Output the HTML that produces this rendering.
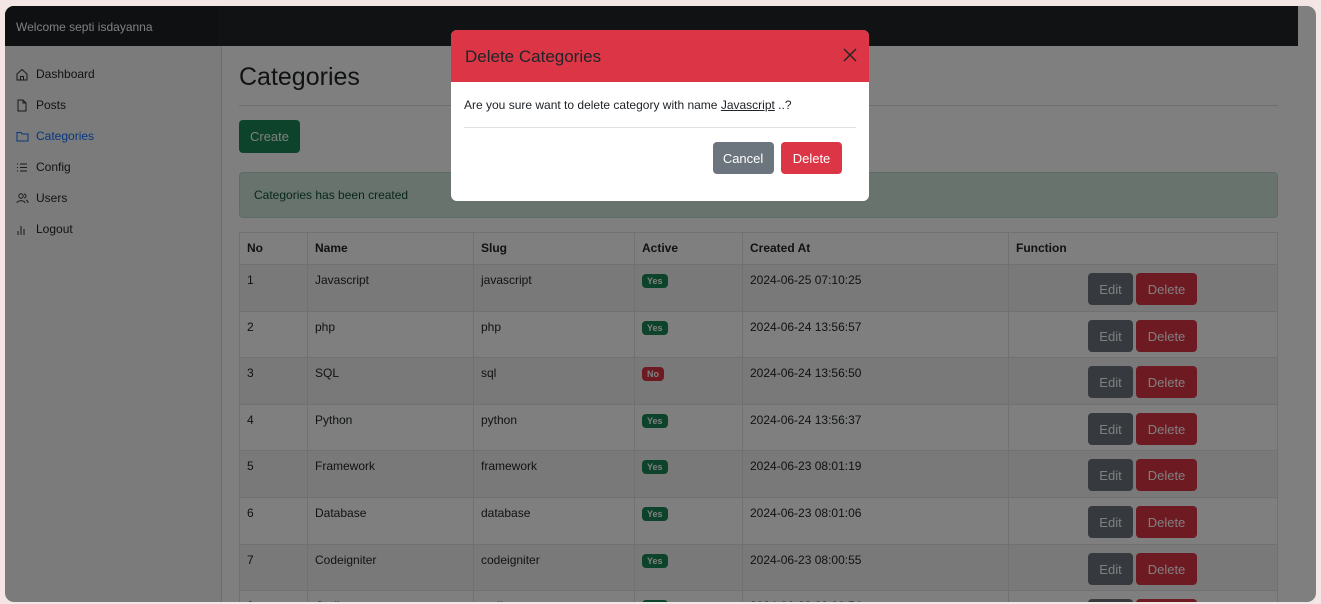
<!DOCTYPE html>
<html><head><style>
*{box-sizing:border-box;margin:0;padding:0}
html,body{width:1321px;height:604px;overflow:hidden}
body{background:#f3e6e4;font-family:"Liberation Sans",sans-serif;position:relative}
#win{position:absolute;left:5px;top:6px;width:1311px;height:596px;border-radius:9px;overflow:hidden;background:#fff}
#hdr{position:absolute;left:0;top:0;width:1293px;height:40px;background:#212529}
#hdr .brand{position:absolute;left:0;top:0;width:213px;height:40px;background:#1d2024;color:#fff;font-size:12px;padding:14px 0 0 11px}
#side{position:absolute;left:0;top:40px;width:217px;height:560px;background:#f7f7f7;border-right:1px solid #dcdcdc;padding-top:21px}
#side div{height:31px;font-size:12px;color:#212529;padding-left:31px;position:relative}
#side div svg{position:absolute;left:11px;top:1px}
#side div.act{color:#0d6efd}
#main{position:absolute;left:234px;top:40px;width:1039px}
h1{font-size:25px;font-weight:normal;color:#212529;margin-top:17px;height:43px;border-bottom:1px solid #ddd;padding-bottom:8px}
.create{position:absolute;top:74px;left:0;width:61px;height:33px;background:#198754;color:#fff;border-radius:4px;font-size:13px;text-align:center;line-height:33px}
.alert{position:absolute;top:126px;left:0;width:1039px;height:46px;background:#d1e7dd;border:1px solid #badbcc;border-radius:4px;color:#0f5132;font-size:12px;padding:15px 14px}
table{position:absolute;top:186px;left:0;width:1039px;border-collapse:collapse;font-size:12px;color:#212529}
td,th{border:1px solid #dee2e6;text-align:left;vertical-align:top;padding:8px 7px}
th{height:32px;font-weight:bold}
td{height:46.6px}
tbody tr:nth-child(odd) td{background:#f2f2f2}
.b{display:inline-block;color:#fff;font-size:9px;font-weight:bold;border-radius:4px;padding:2px 5px}
.y{background:#198754}.n{background:#dc3545}
.fn{padding:8px 0 0 79px}
.btn{display:inline-block;height:32px;line-height:34px;border-radius:4px;color:#fff;font-size:13px;text-align:center}
.e{width:45px;background:#6c757d;margin-right:3px}.d{width:61px;background:#dc3545}
#ov{position:absolute;inset:0;background:rgba(0,0,0,.5)}
#modal{position:absolute;left:446px;top:24px;width:418px;height:171px;background:#fff;border-radius:6px;overflow:hidden}
#modal .mh{height:52px;background:#dc3545;color:#212529;font-size:17px;padding:17px 14px}
#modal .x{position:absolute;right:12px;top:18px}
#modal .mb{font-size:12px;color:#212529;padding-top:16px;height:46px;margin:0 13px;border-bottom:1px solid #dee2e6}
#modal .mf{position:absolute;right:27px;top:112px}
</style></head><body>
<div id="win">
<div id="hdr"><div class="brand">Welcome septi isdayanna</div></div>
<div id="side">
<div><svg width="12" height="13" viewBox="0 0 12 13" fill="none" stroke="#333" stroke-width="1"><path d="M1 6L6 1.5 11 6V12H1Z M4.5 12V8.5h3V12"/></svg>Dashboard</div>
<div><svg width="12" height="13" viewBox="0 0 12 13" fill="none" stroke="#333"><path d="M2 1h5l3 3v8H2Z M7 1v3h3"/></svg>Posts</div>
<div class="act"><svg width="13" height="13" viewBox="0 0 13 13" fill="none" stroke="#0d6efd"><path d="M1 2.5h4l1 1.5h6v7H1Z"/></svg>Categories</div>
<div><svg width="12" height="13" viewBox="0 0 12 13" fill="none" stroke="#333"><path d="M1 3h1M1 6.5h1M1 10h1M4 3h7M4 6.5h7M4 10h7"/></svg>Config</div>
<div><svg width="13" height="13" viewBox="0 0 13 13" fill="none" stroke="#333"><circle cx="5" cy="4" r="2.2"/><path d="M1 11c0-3 8-3 8 0M8 2a2 2 0 0 1 0 4M10 8c1.5.5 2 1.5 2 3"/></svg>Users</div>
<div><svg width="12" height="13" viewBox="0 0 12 13" fill="none" stroke="#333"><path d="M2 12V8M5 12V3M8 12V6M11 12h0"/></svg>Logout</div>
</div>
<div id="main">
<h1>Categories</h1>
<div class="create">Create</div>
<div class="alert">Categories has been created</div>
<table>
<colgroup><col style="width:68px"><col style="width:166px"><col style="width:161px"><col style="width:108px"><col style="width:266px"><col></colgroup>
<thead><tr><th>No</th><th>Name</th><th>Slug</th><th>Active</th><th>Created At</th><th>Function</th></tr></thead>
<tbody>
<tr><td>1</td><td>Javascript</td><td>javascript</td><td><span class="b y">Yes</span></td><td>2024-06-25 07:10:25</td><td class="fn"><span class="btn e">Edit</span><span class="btn d">Delete</span></td></tr>
<tr><td>2</td><td>php</td><td>php</td><td><span class="b y">Yes</span></td><td>2024-06-24 13:56:57</td><td class="fn"><span class="btn e">Edit</span><span class="btn d">Delete</span></td></tr>
<tr><td>3</td><td>SQL</td><td>sql</td><td><span class="b n">No</span></td><td>2024-06-24 13:56:50</td><td class="fn"><span class="btn e">Edit</span><span class="btn d">Delete</span></td></tr>
<tr><td>4</td><td>Python</td><td>python</td><td><span class="b y">Yes</span></td><td>2024-06-24 13:56:37</td><td class="fn"><span class="btn e">Edit</span><span class="btn d">Delete</span></td></tr>
<tr><td>5</td><td>Framework</td><td>framework</td><td><span class="b y">Yes</span></td><td>2024-06-23 08:01:19</td><td class="fn"><span class="btn e">Edit</span><span class="btn d">Delete</span></td></tr>
<tr><td>6</td><td>Database</td><td>database</td><td><span class="b y">Yes</span></td><td>2024-06-23 08:01:06</td><td class="fn"><span class="btn e">Edit</span><span class="btn d">Delete</span></td></tr>
<tr><td>7</td><td>Codeigniter</td><td>codeigniter</td><td><span class="b y">Yes</span></td><td>2024-06-23 08:00:55</td><td class="fn"><span class="btn e">Edit</span><span class="btn d">Delete</span></td></tr>
<tr><td>8</td><td>Coding</td><td>coding</td><td><span class="b y">Yes</span></td><td>2024-06-23 08:00:54</td><td class="fn"><span class="btn e">Edit</span><span class="btn d">Delete</span></td></tr>
</tbody></table>
</div>
<div id="ov"></div>
<div id="modal">
<div class="mh">Delete Categories</div>
<svg class="x" width="14" height="14" viewBox="0 0 14 14" stroke="#222" stroke-width="1.4"><path d="M1 1L13 13M13 1L1 13"/></svg>
<div class="mb">Are you sure want to delete category with name <u>Javascript</u> ..?</div>
<div class="mf"><span class="btn" style="width:61px;background:#6c757d">Cancel</span> <span class="btn" style="width:61px;background:#dc3545;margin-left:3px">Delete</span></div>
</div>
</div>
</body></html>
